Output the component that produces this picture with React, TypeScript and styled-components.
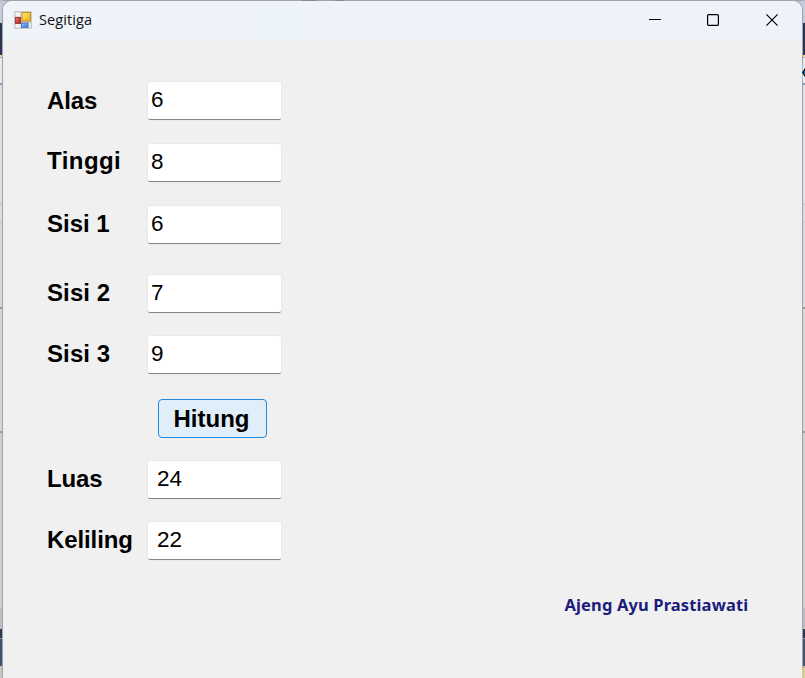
import React from "react";
import styled, { createGlobalStyle } from "styled-components";

const GlobalStyle = createGlobalStyle`
  * { box-sizing: border-box; }
  html, body { margin: 0; padding: 0; overflow: hidden; }
`;

const Desktop = styled.div`
  width: 805px;
  height: 678px;
  padding: 1px 3px 0;
  overflow: hidden;
  position: relative;
  background: linear-gradient(
    #b4b7c4 0 1px, #c6cbd9 1px 23px, #293654 23px 55px, #efe08c 55px 57px, #a4a9ba 57px 58px,
    #e9e9ec 58px 83px, #8f9ab4 83px 85px, #dfdfe3 85px 203px, #cfcfd2 203px 206px, #dddde0 206px 221px,
    #cdcdd0 221px 223px, #dadadc 223px 307px, #98989c 307px 309px, #d6d6d6 309px 431px,
    #98989a 431px 433px, #cecece 433px 608px, #bebec2 608px 629px, #2b3857 629px 638px,
    #8a93a8 638px 639px, #435172 639px 666px, #c9c6bd 666px 678px
  );
`;

const TopEdge = styled.div`
  position: absolute;
  top: 0;
  left: 3px;
  width: 799px;
  height: 1px;
  background: linear-gradient(90deg, #a0a2b0 0 299px, #8d8790 299px 313px, #a0a2b0 313px 332px, #8d8790 332px 341px, #a0a2b0 341px);
`;

const EdgeArrow = styled.svg`
  position: absolute;
  left: 802px;
  top: 65px;
`;

const CornerPanel = styled.div`
  position: absolute;
  left: 802px;
  top: 667px;
  width: 3px;
  height: 11px;
  background: #d9cb94;
  border-top: 1px solid #c8ac5c;
`;

const Window = styled.main`
  width: 799px;
  height: 680px;
  border-radius: 9px 9px 0 0;
  background: #f0f0f0;
  box-shadow: 0 0 0 1px #a2a2aa;
  overflow: hidden;
`;

const TitleBar = styled.header`
  height: 39px;
  display: flex;
  align-items: center;
  padding: 0 0 1px 11px;
  background: linear-gradient(90deg, #eef4f8 0, #eef3fb 45%, #eef3fb 100%);
`;

const Title = styled.h1`
  margin: 0 auto 0 7px;
  padding-bottom: 1px;
  font: 400 14.5px/20px "Open Sans", "Noto Sans", sans-serif;
  letter-spacing: 0.1px;
  color: #111;
`;

const Controls = styled.div`
  display: flex;
  align-items: center;
  height: 38px;
  padding-right: 1px;
`;

const ControlButton = styled.button`
  width: 58.5px;
  height: 38px;
  padding: 0;
  border: 0;
  background: none;
  display: grid;
  place-items: center;
`;

const Form = styled.form`
  padding: 42px 0 0 44px;
  font-family: "Liberation Sans", Arial, sans-serif;
  color: #000;
`;

const Row = styled.div<{ $gap?: number }>`
  display: flex;
  height: 38px;
  margin-top: ${(p) => p.$gap ?? 0}px;
`;

const Label = styled.label<{ $lift: number; $tracking: number }>`
  width: 101px;
  font-size: 24px;
  font-weight: 700;
  line-height: ${(p) => 37 - 2 * p.$lift}px;
  letter-spacing: ${(p) => p.$tracking}px;
  white-space: nowrap;
`;

const Field = styled.input<{ $inset: number }>`
  width: 133px;
  height: 38px;
  padding: 0 0 1px ${(p) => p.$inset}px;
  border: 0;
  border-bottom: 1px solid #858585;
  border-radius: 2px;
  box-shadow: 0 0 0 1px #e9e9e9, 0 1px 0 #c8c8c8;
  outline: 0;
  background: #fff;
  color: #000;
  font: 400 22.5px "Liberation Sans", Arial, sans-serif;
`;

const SubmitButton = styled.button`
  width: 109px;
  height: 39px;
  margin: 0 0 0 111px;
  padding: 0 2px 0 0;
  border: 1px solid #218ade;
  border-radius: 4px;
  background: #e0eef9;
  color: #000;
  font: 700 24px "Liberation Sans", Arial, sans-serif;
`;

const Author = styled.p`
  margin: 33px 0 0 517.5px;
  font: 700 16.5px/24px "Noto Sans", "Open Sans", sans-serif;
  letter-spacing: 0.13px;
  color: #1c1c7c;
  white-space: nowrap;
`;

const FormIcon = () => (
  <svg width="18" height="18" viewBox="0 0 18 18">
    <defs>
      <linearGradient id="gold" x2="1" y2="1"><stop stopColor="#ffe887" /><stop offset="1" stopColor="#efad08" /></linearGradient>
      <linearGradient id="blue" x2="1" y2="1"><stop stopColor="#8dbcff" /><stop offset="1" stopColor="#3c78dc" /></linearGradient>
      <linearGradient id="red" x2="1" y2="1"><stop stopColor="#e77b6b" /><stop offset="1" stopColor="#a81f20" /></linearGradient>
    </defs>
    <rect width="18" height="18" rx="1" fill="#c9cbcd" />
    <rect x="1.5" y="1.5" width="5" height="4" fill="#f2f3f4" />
    <rect x="1.5" y="13" width="5" height="3.5" fill="#f2f3f4" />
    <rect x="14.5" y="12" width="2" height="4.5" fill="#eceded" />
    <rect x="1.5" y="6.5" width="5" height="6" fill="url(#red)" stroke="#ad3833" />
    <rect x="8" y="1.5" width="8.5" height="8.5" fill="url(#gold)" stroke="#c09120" />
    <rect x="7.5" y="12" width="6.5" height="4.5" fill="url(#blue)" stroke="#4b7fcd" />
  </svg>
);

type FieldData = { label: string; value: string; gap: number; inset: number; lift: number; tracking: number };

const inputs: FieldData[] = [
  { label: "Alas", value: "6", gap: 0, inset: 3, lift: 0, tracking: -0.1 },
  { label: "Tinggi", value: "8", gap: 24, inset: 3, lift: 2, tracking: 0.45 },
  { label: "Sisi 1", value: "6", gap: 24, inset: 3, lift: 1, tracking: 0 },
  { label: "Sisi 2", value: "7", gap: 31, inset: 3, lift: 1, tracking: 0.1 },
  { label: "Sisi 3", value: "9", gap: 23, inset: 3, lift: 1, tracking: 0.1 },
];
const results: FieldData[] = [
  { label: "Luas", value: "24", gap: 24, inset: 9, lift: 1, tracking: -0.1 },
  { label: "Keliling", value: "22", gap: 23, inset: 9, lift: 1, tracking: -0.1 },
];

const FieldRow = ({ label, value, gap, inset, lift, tracking }: FieldData) => (
  <Row $gap={gap}>
    <Label htmlFor={label} $lift={lift} $tracking={tracking}>{label}</Label>
    <Field id={label} $inset={inset} defaultValue={value} />
  </Row>
);

export default function App() {
  return (
    <>
      <GlobalStyle />
      <Desktop>
        <Window>
          <TitleBar>
            <FormIcon />
            <Title>Segitiga</Title>
            <Controls>
              <ControlButton type="button" aria-label="Minimize">
                <svg width="12" height="12"><path d="M0 5.5h12" stroke="#000" /></svg>
              </ControlButton>
              <ControlButton type="button" aria-label="Maximize">
                <svg width="12" height="12"><rect x=".6" y=".6" width="10.8" height="10.8" rx="1" fill="none" stroke="#000" strokeWidth="1.2" /></svg>
              </ControlButton>
              <ControlButton type="button" aria-label="Close">
                <svg width="12" height="12"><path d="M.4.4l11.2 11.2M11.6.4L.4 11.6" stroke="#000" strokeWidth="1.15" /></svg>
              </ControlButton>
            </Controls>
          </TitleBar>
          <Form onSubmit={(e) => e.preventDefault()}>
            {inputs.map((f) => <FieldRow key={f.label} {...f} />)}
            <Row $gap={25}>
              <SubmitButton>Hitung</SubmitButton>
            </Row>
            {results.map((f) => <FieldRow key={f.label} {...f} />)}
            <Author>Ajeng Ayu Prastiawati</Author>
          </Form>
        </Window>
        <TopEdge />
        <EdgeArrow width="3" height="16"><path d="M0 0h1v16H0z" fill="#8fc6e6" /><path d="M3 3L0 7.5L3 12z" fill="#080808" /><path d="M2 6h1v3H2z" fill="#1678bd" /></EdgeArrow>
        <CornerPanel />
      </Desktop>
    </>
  );
}
